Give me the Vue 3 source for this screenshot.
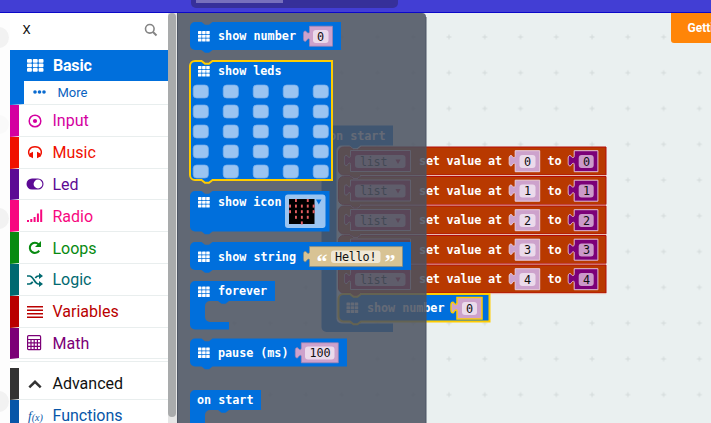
<script setup>
const categories = [
  { name: 'Input', color: '#d400a0', icon: 'target' },
  { name: 'Music', color: '#f01000', icon: 'headphones' },
  { name: 'Led', color: '#5c0a94', icon: 'toggle' },
  { name: 'Radio', color: '#f7087f', icon: 'signal' },
  { name: 'Loops', color: '#078a10', icon: 'redo' },
  { name: 'Logic', color: '#006970', icon: 'random' },
  { name: 'Variables', color: '#b90000', icon: 'lines' },
  { name: 'Math', color: '#7c0077', icon: 'calc' },
]
const advanced = [
  { name: 'Advanced', color: '#333333', text: '#111111', icon: 'up' },
  { name: 'Functions', color: '#0756a8', icon: 'fx' },
]
const statements = [0, 1, 2, 3, 4].map((n) => ({ n, y: 147 + n * 29.5 }))
const five = [0, 1, 2, 3, 4]
const heart = [[1, 0], [3, 0], [0, 1], [1, 1], [2, 1], [3, 1], [4, 1], [0, 2], [1, 2], [2, 2], [3, 2], [4, 2], [1, 3], [2, 3], [3, 3], [2, 4]]
const gridIcons = [[198, 31], [198, 66], [198, 197], [198, 251.5], [198, 286.5], [198, 347.5]]
const flyoutLabels = [
  { t: 'show number', x: 218, y: 40, w: 78 },
  { t: 'show leds', x: 218, y: 75, w: 63.5 },
  { t: 'show icon', x: 218, y: 205.5, w: 63.5 },
  { t: 'show string', x: 218, y: 260.5, w: 78 },
  { t: 'forever', x: 218, y: 295, w: 49 },
  { t: 'pause (ms)', x: 218, y: 356.5, w: 70.5 },
  { t: 'on start', x: 197, y: 404, w: 56.5 },
]

// Statement block outline with top notch and bottom connector.
const stack = (x, y, w, h) =>
  `M${x} ${y + 5}a5 5 0 0 1 5-5h6.500l3.500 2.800h4l3.500-2.800H${x + w}V${y + h}H${x + 22.5}l-3.500 2.800h-4l-3.500-2.800h-6.500a5 5 0 0 1-5-5z`
// C-shaped block outline wrapping an inner statement area.
const wrap = (x, y, w, head, inner, foot, footW) =>
  `M${x} ${y + 5}a5 5 0 0 1 5-5H${x + w}V${y + head}H${x + 39}l-3.500 2.800h-4l-3.500-2.800h-8a5 5 0 0 0-5 5v${inner - 10}a5 5 0 0 0 5 5H${x + footW}v${foot}H${x + 5}a5 5 0 0 1-5-5z`
// Value block outline with a puzzle tab on the left.
const value = (x, y, w, h) =>
  `M${x} ${y}h${w}v${h}h${-w}V${y + 14}c0-3-2.500-1-3.500 1c-3 1-2.500-3-2.500-5s-.5-6 2.500-5c1 2 3.500 3 3.500 0z`
</script>

<template>
  <div class="app">
    <header class="topbar"><div class="tabs"><div class="tab"></div></div></header>
    <main class="body">
      <div class="gutter">
        <i class="ghost g1"></i><i class="ghost g2"></i><i class="ghost g3"></i><i class="ghost g4"></i>
      </div>
      <nav class="toolbox">
        <div class="search">
          <span>X</span>
          <svg width="14" height="14" viewBox="0 0 14 14" fill="none" stroke="#858585"><circle cx="5.800" cy="5.800" r="4.300" stroke-width="1.600" /><path d="M9 9l3.500 3.500" stroke-width="2" /></svg>
        </div>
        <div class="basic">
          <svg width="17" height="13" viewBox="0 0 17 13" fill="#fff">
            <template v-for="r in 3" :key="r"><rect v-for="c in 3" :key="c" :x="(c - 1) * 5.8" :y="(r - 1) * 4.5" width="4.900" height="3.700" rx="0.900" /></template>
          </svg>
          <span>Basic</span>
        </div>
        <div class="more">
          <svg width="13" height="4" viewBox="0 0 13 4" fill="#0a6bd0"><circle cx="2" cy="2" r="1.800" /><circle cx="6.500" cy="2" r="1.800" /><circle cx="11" cy="2" r="1.800" /></svg>
          <span>More</span>
        </div>
        <template v-for="(group, g) in [categories, advanced]" :key="g">
          <div v-if="g" class="divider"></div>
          <div v-for="c in group" :key="c.name" class="row" :style="{ borderLeftColor: c.color, color: c.color }">
            <svg class="icon" width="18" height="18" viewBox="0 0 18 18" fill="currentColor">
              <g v-if="c.icon === 'target'"><circle cx="9" cy="9" r="5.800" fill="none" stroke="currentColor" stroke-width="1.500" /><circle cx="9" cy="9" r="2.100" /></g>
              <g v-else-if="c.icon === 'headphones'"><path d="M4.300 12.500C.5 7 4 2.800 9 2.800s8.500 4.200 4.700 9.700" fill="none" stroke="currentColor" stroke-width="1.500" /><path d="M4 9.200l3-1.500v6.500l-3-1.500zM14 9.200l-3-1.500v6.500l3-1.500z" /></g>
              <g v-else-if="c.icon === 'toggle'"><rect x="0.500" y="3.500" width="17" height="11" rx="5.500" /><circle cx="12" cy="9" r="4.400" fill="#fff" /></g>
              <path v-else-if="c.icon === 'signal'" d="M1 13h2v2H1zM4.300 12h2v3h-2zM7.600 10h2v5h-2zM10.900 6.500h2V15h-2zM14.200 2.500h2V15h-2z" />
              <g v-else-if="c.icon === 'redo'"><path d="M13.200 11.600A5.100 5.100 0 1 1 12.500 5.200" fill="none" stroke="currentColor" stroke-width="2" /><path d="M15 2v6H9z" /></g>
              <g v-else-if="c.icon === 'random'"><path d="M1 5h2.500c4 0 5 8 9 8H14M1 13h2.500c1.500 0 2.500-1 3.200-2.200M9.300 7C10 5.900 11 5 12.500 5H14" fill="none" stroke="currentColor" stroke-width="1.700" /><path d="M13 2l4 3-4 3zM13 10l4 3-4 3z" /></g>
              <path v-else-if="c.icon === 'lines'" d="M1 3h16v1.600H1zM1 6.500h16v1.600H1zM1 10h16v1.600H1zM1 13.500h16v1.600H1z" />
              <g v-else-if="c.icon === 'calc'"><rect x="1.600" y="1.700" width="13" height="14" rx="1" fill="none" stroke="currentColor" stroke-width="1.200" /><path d="M2 5.500h12.500M2 8.900h12.500M2 12.300h12.500M5 6v9.500M8.200 6v9.500M11.400 6v9.500" fill="none" stroke="currentColor" stroke-width="1.200" /></g>
              <path v-else-if="c.icon === 'up'" d="M3.300 12.300L9 6.800l5.700 5.500" fill="none" stroke="currentColor" stroke-width="2.500" />
              <text v-else class="fx" x="2" y="12.500">f<tspan font-size="10" dy="1.500">(x)</tspan></text>
            </svg>
            <span :style="{ color: c.text }">{{ c.name }}</span>
          </div>
        </template>
      </nav>
      <div class="scroll"><div class="thumb"></div></div>
      <section class="workspace">
        <svg class="canvas" width="534" height="410" viewBox="177 13 534 410">
          <defs>
            <pattern id="dots" x="431.100" y="19.100" width="35.770" height="35.770" patternUnits="userSpaceOnUse">
              <path d="M15.400 17.900h5M17.900 15.400v5" stroke="#d3dada" stroke-width="1" />
            </pattern>
            <g id="leds">
              <template v-for="r in 3" :key="r"><rect v-for="c in 3" :key="c" :x="(c - 1) * 4.1" :y="(r - 1) * 3.7" width="3.500" height="3" rx="0.500" fill="#fff" /></template>
            </g>
          </defs>
          <rect x="177" y="13" width="534" height="410" fill="#eaf0f0" />
          <rect x="177" y="13" width="534" height="410" fill="url(#dots)" />

          <path :d="wrap(321.5, 125.500, 71.500, 20, 178, 8.500, 71.500)" fill="#006fdc" />
          <text class="label" x="329" y="140" textLength="56.500">on start</text>
          <g v-for="s in statements" :key="s.n">
            <path :d="stack(338.5, s.y, 267.5, 28)" fill="#b83900" stroke="#b40c08" />
            <path :d="`M360 ${s.y + 28.7}H606.5`" stroke="#edc8c0" stroke-width="1" />
            <path :d="value(350.5, s.y + 3.5, 60, 21)" fill="#b0002c" stroke="#e0b8c0" />
            <rect x="355" :y="s.y + 8" width="50.500" height="13" rx="3" fill="#d8a0b0" />
            <text class="value" x="360" :y="s.y + 18.5" textLength="27.500">list</text>
            <path :d="`M395.500 ${s.y + 12.500}h5l-2.500 4.500z`" fill="#b0002c" />
            <text class="label" x="419" :y="s.y + 18" textLength="83">set value at</text>
            <path :d="value(515.2, s.y + 3.7, 24.500, 21)" fill="#cda2cc" stroke="#e7cfe0" />
            <rect x="519.500" :y="s.y + 8" width="16" height="13" rx="3" fill="#ebdaeb" />
            <text class="value" x="524" :y="s.y + 18.700" textLength="7">{{ s.n }}</text>
            <text class="label" x="547.500" :y="s.y + 18" textLength="14">to</text>
            <path :d="value(574.2, s.y + 3.7, 23.700, 21)" fill="#7c0078" stroke="#e3c0d5" />
            <rect x="578.700" :y="s.y + 8" width="15" height="13" rx="3" fill="#cb99c9" />
            <text class="value" x="583" :y="s.y + 18.700" textLength="7">{{ s.n }}</text>
          </g>
          <path :d="stack(338.5, 294, 151, 27.500)" fill="#006fdc" stroke="#fc0" stroke-width="2" />
          <use href="#leds" x="346.500" y="302.500" />
          <text class="label" x="367" y="312" textLength="77.500">show number</text>
          <path :d="value(457, 297.500, 25, 21.500)" fill="#cda2cc" stroke="#fc0" stroke-width="1.500" />
          <rect x="462" y="302" width="15" height="13" rx="3" fill="#ebdaeb" />
          <text class="value" x="466" y="312.500" textLength="7">0</text>

          <path d="M177 13H422q4 0 4 4V423H177z" fill="#4b5260" fill-opacity="0.860" />
          <path d="M177.500 13V423M426 17V423" stroke="#4d5564" stroke-width="1" />

          <g fill="#006fdc">
            <path :d="stack(190, 22, 151, 28)" />
            <path :d="stack(190, 61, 142, 119)" stroke="#fc0" stroke-width="2" />
            <path :d="stack(190, 191, 139.500, 40.500)" />
            <path :d="stack(190, 242, 221, 28)" />
            <path :d="wrap(190, 281, 85, 20, 21, 7.500, 39)" />
            <path :d="stack(190, 338.500, 157, 28)" />
            <path :d="wrap(190, 390, 71, 20, 22, 8, 71)" />
          </g>
          <use v-for="(p, i) in gridIcons" :key="i" href="#leds" :x="p[0]" :y="p[1]" />
          <text v-for="l in flyoutLabels" :key="l.t" class="label" :x="l.x" :y="l.y" :textLength="l.w">{{ l.t }}</text>

          <path :d="value(309.5, 26.200, 23, 20)" fill="#cda2cc" stroke="#a482ae" stroke-width="0.700" />
          <rect x="313" y="30" width="15.500" height="13" rx="3" fill="#ebdaeb" />
          <text class="value" x="317" y="40.500" textLength="7">0</text>

          <template v-for="r in five" :key="r">
            <rect v-for="c in five" :key="c" :x="193.2 + c * 30" :y="85 + r * 20" width="15.200" height="13" rx="3.500" fill="#9ac4f1" stroke="#77adeb" stroke-width="0.700" />
          </template>

          <rect x="285" y="194.500" width="40.500" height="33.500" rx="3" fill="#9ac4f1" />
          <rect x="289" y="199" width="25.500" height="25" fill="#000" />
          <rect v-for="(h, i) in heart" :key="i" :x="289.1 + h[0] * 5.9" :y="199 + h[1] * 5.6" width="1.900" height="3" fill="#e45d61" />
          <path d="M316 199.500h5.500l-2.750 5z" fill="#006fdc" />

          <path :d="value(309.5, 246.600, 93, 20)" fill="#d8c394" stroke="#8d8b79" stroke-width="0.700" />
          <rect x="331" y="250.500" width="49.500" height="12.500" rx="3" fill="#f0e8d6" />
          <text class="value" x="335" y="261" textLength="41.500">Hello!</text>
          <text class="quote" x="316.500" y="268.500">“</text>
          <text class="quote" x="384.500" y="268.500">”</text>

          <path :d="value(301.3, 342.800, 37, 20)" fill="#cda2cc" stroke="#a482ae" stroke-width="0.700" />
          <rect x="305" y="346.500" width="29.500" height="13" rx="3" fill="#ebdaeb" />
          <text class="value" x="309.500" y="357" textLength="21">100</text>
        </svg>
        <div class="start">Getting Started</div>
      </section>
    </main>
  </div>
</template>

<style>
body { margin: 0; overflow: hidden; }
</style>

<style scoped>
.app { width: 711px; height: 423px; overflow: hidden; display: flex; flex-direction: column; font-family: Roboto, sans-serif; background: #fff; }
.topbar { box-sizing: border-box; height: 13px; flex: none; background: #423ed4; border-bottom: 1px solid #0b08c8; padding-left: 191px; }
.tabs { width: 207px; height: 7.5px; background: #36309a; border-radius: 0 0 5px 5px; padding-left: 5px; box-sizing: border-box; }
.tab { width: 87px; height: 3px; background: #7770bd; }
.body { height: 410px; display: flex; }
.gutter { width: 9.5px; flex: none; position: relative; overflow: hidden; background: #fdfdfd; }
.ghost { position: absolute; right: 1px; width: 21px; height: 21px; border-radius: 50%; background: #f2f2f2; }
.g1 { top: 14px; }
.g2 { top: 102px; height: 19px; background: #f9f9f9; }
.g3 { top: 195px; }
.g4 { top: 378px; }
.toolbox { width: 158.5px; flex: none; overflow: hidden; background: #fff; }
.search { box-sizing: border-box; height: 36.5px; padding: 0 10px 3px 13px; display: flex; align-items: center; justify-content: space-between; font-size: 13px; color: #111; }
.basic { height: 31px; box-sizing: border-box; background: #006fdc; color: #fff; display: flex; align-items: center; gap: 9px; padding: 1px 0 0 17.5px; font-size: 16px; font-weight: 700; letter-spacing: -0.2px; }
.more { height: 24.500px; box-sizing: border-box; border-left: 14px solid #006fdc; border-bottom: 1px solid #e8eeee; display: flex; align-items: center; gap: 11.5px; padding-left: 9.5px; font-size: 13px; color: #0a62c0; }
.row { box-sizing: border-box; height: 31.8px; border-left: 9.5px solid; border-bottom: 1px solid #e9eeee; display: flex; align-items: center; gap: 9px; padding: 1px 0 0 7px; font-size: 16px; }
.row .icon { flex: none; }
.divider { height: 8.5px; box-sizing: border-box; border-top: 2px solid #fff; background: #fff; box-shadow: inset 0 1px #e9eeee; }
.fx { font: italic 13px "Liberation Serif", serif; }
.scroll { width: 9px; flex: none; background: #e6e6e6; }
.thumb { width: 8px; height: 404px; background: #a9abac; border-radius: 4px; }
.workspace { flex: 1; position: relative; overflow: hidden; }
.canvas { display: block; }
.start { position: absolute; left: 493.5px; top: 0; height: 30px; box-sizing: border-box; padding: 0 17px; line-height: 31px; background: #ff8508; border-radius: 0 0 3px 3px; color: #fff; font-size: 12px; font-weight: 700; white-space: nowrap; }
.label, .value { font-family: "DejaVu Sans Mono", monospace; font-size: 11.8px; white-space: pre; }
.label { font-weight: 700; fill: #fff; }
.value { fill: #111; }
.quote { font: 700 22px "Liberation Serif", serif; fill: #fff; }
</style>
